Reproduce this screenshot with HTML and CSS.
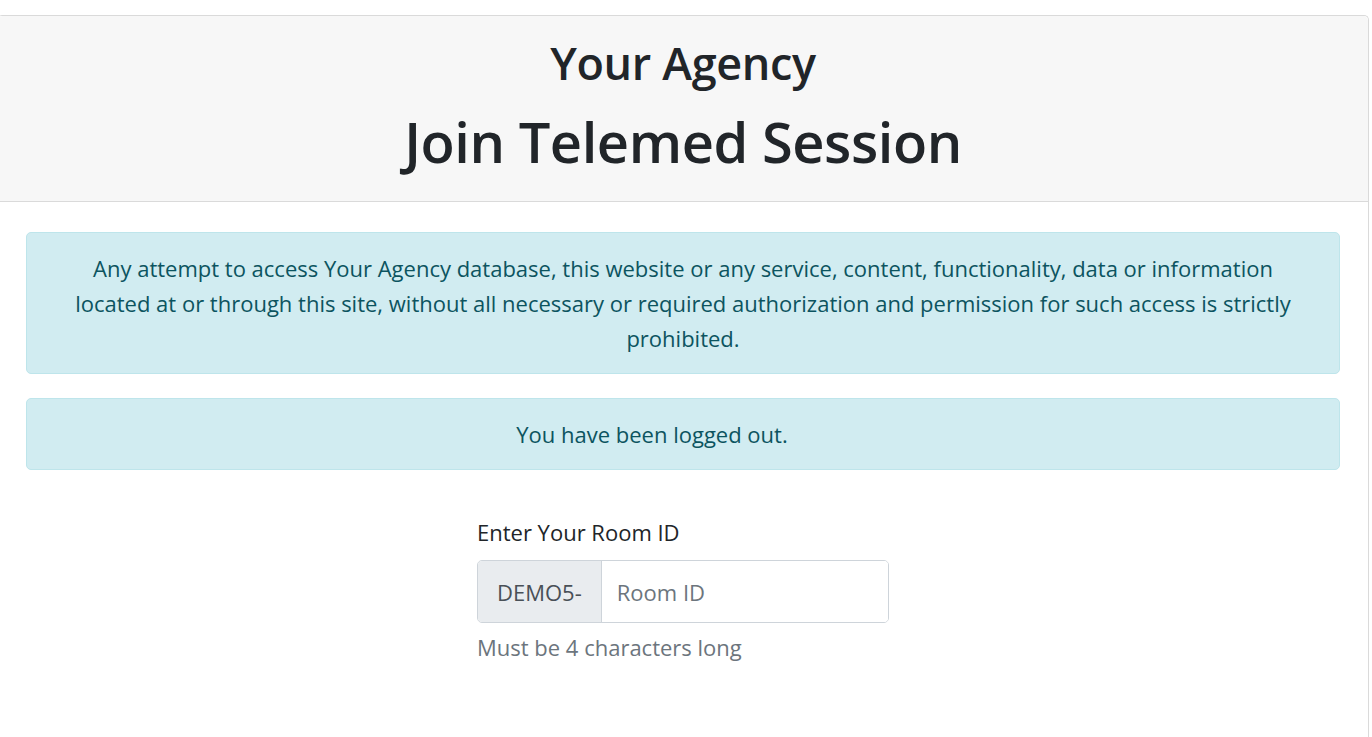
FILE: index.html
```html
<!DOCTYPE html>
<html lang="en">
<head>
<meta charset="utf-8">
<title>Join Telemed Session</title>
<link rel="stylesheet" href="styles.css">
</head>
<body>
<div class="page">
  <div class="card">
    <div class="card-header">
      <h2 class="agency">Your Agency</h2>
      <h1 class="title">Join Telemed Session</h1>
    </div>
    <div class="card-body">
      <div class="alert">Any attempt to access Your Agency database, this website or any service, content, functionality, data or information located at or through this site, without all necessary or required authorization and permission for such access is strictly prohibited.</div>
      <div class="alert alert-dismissible">You have been logged out.</div>
      <form class="room-form">
        <label class="label" for="room">Enter Your Room ID</label>
        <div class="input-group">
          <span class="prefix">DEMO5-</span>
          <input class="control" id="room" type="text" placeholder="Room ID">
        </div>
        <small class="help">Must be 4 characters long</small>
      </form>
    </div>
  </div>
</div>
</body>
</html>
```

FILE: styles.css
```css
html, body {
  margin: 0;
  padding: 0;
  background: #fff;
}
body {
  font-family: "Open Sans", "Noto Sans", sans-serif;
  color: #212529;
  overflow: hidden;
}
.page {
  padding-top: 15px;
}
.card {
  margin-left: -3px;
  width: 1372px;
  min-height: 722px;
  box-sizing: border-box;
  border: 1px solid #dadada;
  border-bottom-width: 0;
  border-radius: 5px 5px 0 0;
  background: #fff;
}
.card-header {
  background: #f7f7f7;
  border-bottom: 1px solid #dadada;
  border-radius: 5px 5px 0 0;
  text-align: center;
  padding: 17px 20px 22px;
}
.agency {
  margin: 0 0 10px;
  font-size: 45px;
  font-weight: 600;
  letter-spacing: -0.35px;
  line-height: 60px;
  color: #212529;
}
.title {
  margin: 0;
  font-size: 56px;
  font-weight: 600;
  letter-spacing: -0.45px;
  line-height: 76px;
  color: #212529;
}
.card-body {
  padding: 30px 28px 0;
}
.alert {
  background: #d1ecf1;
  border: 1px solid #bee5eb;
  color: #0c5460;
  border-radius: 5px;
  padding: 18px 35px 17px;
  text-align: center;
  font-size: 22px;
  line-height: 35px;
  margin-bottom: 24px;
}
.alert-dismissible {
  padding-left: 25px;
  padding-right: 87px;
}
.room-form {
  width: 412px;
  margin: 46px auto 0;
  display: flex;
  flex-direction: column;
}
.label {
  font-size: 22px;
  line-height: 33px;
  margin-bottom: 11px;
  color: #212529;
}
.input-group {
  display: flex;
  height: 63px;
  box-sizing: border-box;
  border: 1px solid #ced4da;
  border-radius: 5px;
  overflow: hidden;
}
.prefix {
  display: flex;
  align-items: center;
  padding: 0 19px;
  background: #e9ecef;
  border-right: 1px solid #ced4da;
  color: #495057;
  font-size: 22px;
}
.control {
  flex: 1;
  min-width: 0;
  border: 0;
  outline: none;
  padding: 0 15px;
  font-family: inherit;
  font-size: 22px;
  color: #495057;
  background: #fff;
}
.control::placeholder {
  color: #6c757d;
  opacity: 1;
}
.help {
  margin-top: 8px;
  font-size: 22px;
  line-height: 33px;
  color: #6c757d;
}
```
